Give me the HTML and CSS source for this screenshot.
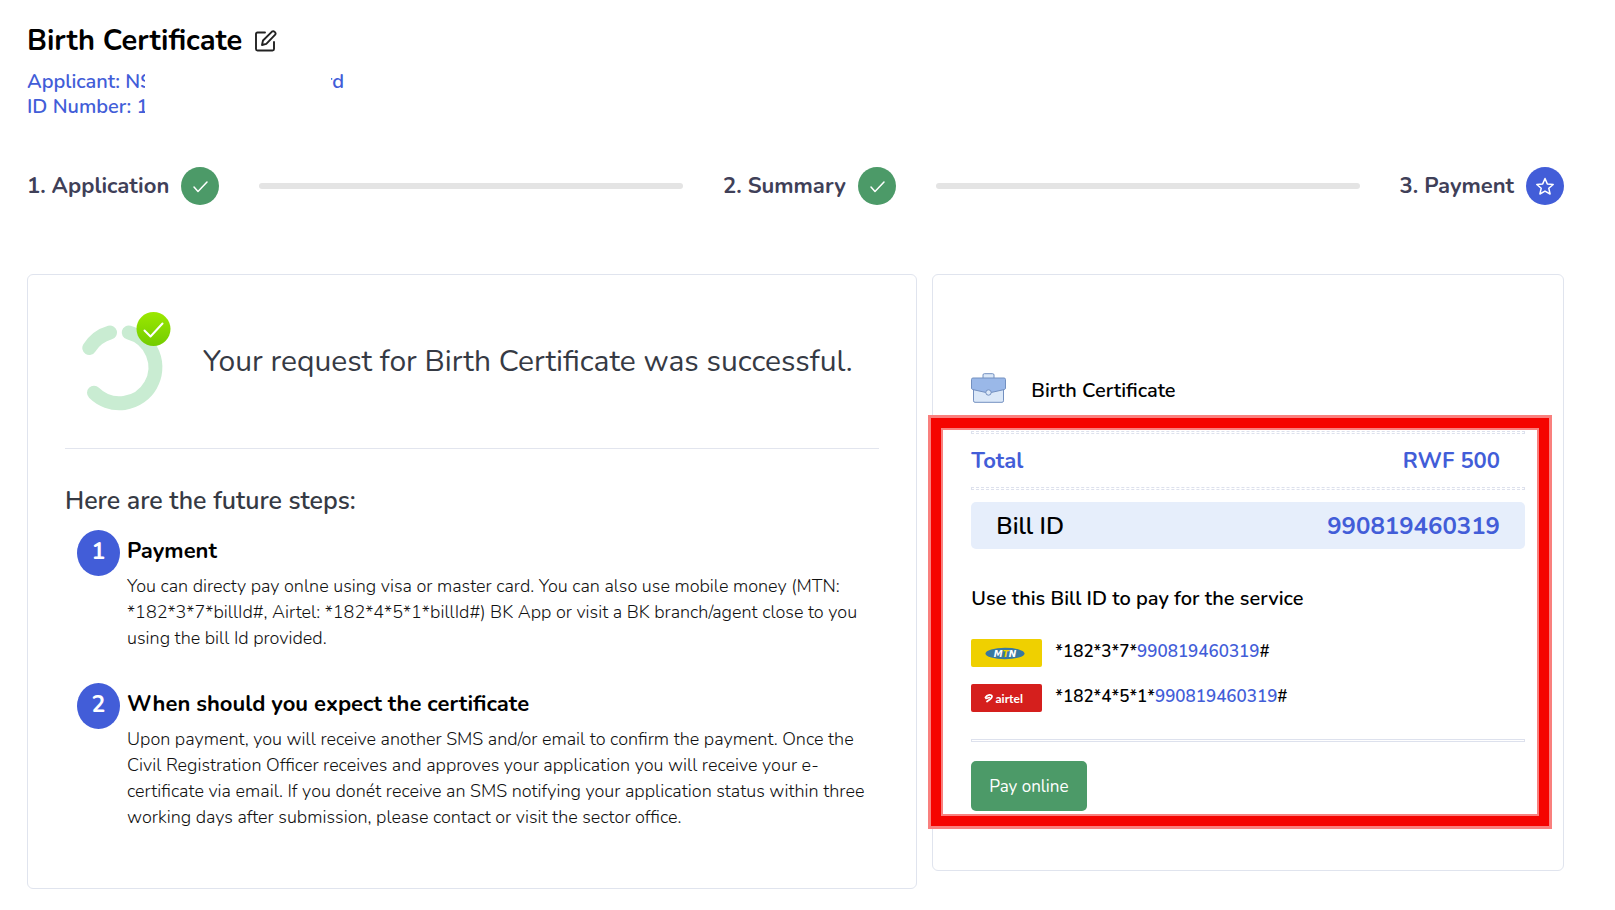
FILE: index.html
```html
<!DOCTYPE html>
<html lang="en">
<head>
  <meta charset="UTF-8">
  <meta name="viewport" content="width=device-width, initial-scale=1.0">
  <title>Birth Certificate</title>
  <link rel="stylesheet" href="styles.css">
</head>
<body>

  <!-- Header -->
  <header class="page-header">
    <h1>Birth Certificate
      <svg class="edit-icon" viewBox="0 0 22 22" fill="none" stroke="#222" stroke-width="1.9" stroke-linecap="round" stroke-linejoin="round">
        <path d="M10 2.500H2.500Q1 2.500 1 4V19Q1 20.500 2.500 20.500H17.500Q19 20.500 19 19V12"/>
        <path d="M7 15L8 10.500L17 1.600Q18.300 .6 19.700 1.900Q21.200 3.300 20.200 4.700L11.300 13.800Z"/>
      </svg>
    </h1>
    <div class="applicant">
      <p><span>Applicant: NS</span><span>rd</span></p>
      <p>ID Number: 1</p>
      <div class="mask"></div>
    </div>
  </header>

  <!-- Progress -->
  <nav class="steps">
    <div class="step">1. Application
      <svg class="step-icon done" viewBox="0 0 38 38"><path d="M13 20L17 24.500L26 15"/></svg>
    </div>
    <div class="step-line"></div>
    <div class="step">2. Summary
      <svg class="step-icon done" viewBox="0 0 38 38"><path d="M13 20L17 24.500L26 15"/></svg>
    </div>
    <div class="step-line"></div>
    <div class="step">3. Payment
      <svg class="step-icon current" viewBox="0 0 38 38"><path d="M19 11.500L21.300 16.900L27.200 17.500L22.800 21.300L24.100 27L19 24.100L13.900 27L15.200 21.300L10.800 17.500L16.700 16.900Z"/></svg>
    </div>
  </nav>

  <main class="content">
    <section class="card request">
      <div class="success">
        <svg class="success-icon" viewBox="0 0 90 100">
          <defs>
            <linearGradient id="lime" x1="0" y1="0" x2="0" y2="1">
              <stop offset="0" stop-color="#9be800"/>
              <stop offset="1" stop-color="#73cc00"/>
            </linearGradient>
          </defs>
          <g fill="none" stroke="#c9ecd2" stroke-width="14" stroke-linecap="round">
            <path d="M7.300 36A36 36 0 0 1 28 20.500"/>
            <path d="M46.700 20.500A36 36 0 1 1 12 80.800"/>
          </g>
          <circle cx="71.500" cy="17" r="17" fill="url(#lime)"/>
          <path d="M62.500 18.500L68.500 24.500L80.500 11.500" fill="none" stroke="#fff" stroke-width="2" stroke-linecap="round" stroke-linejoin="round"/>
        </svg>
        <h2>Your request for Birth Certificate was successful.</h2>
      </div>

      <h3>Here are the future steps:</h3>
      <div class="future">
        <span class="number">1</span>
        <div>
          <h4>Payment</h4>
          <p>You can directy pay onlne using visa or master card. You can also use mobile money (MTN:<br>
            *182*3*7*billId#, Airtel: *182*4*5*1*billId#) BK App or visit a BK branch/agent close to you<br>
            using the bill Id provided.</p>
        </div>
      </div>
      <div class="future">
        <span class="number">2</span>
        <div>
          <h4>When should you expect the certificate</h4>
          <p>Upon payment, you will receive another SMS and/or email to confirm the payment. Once the<br>
            Civil Registration Officer receives and approves your application you will receive your e-<br>
            certificate via email. If you donét receive an SMS notifying your application status within three<br>
            working days after submission, please contact or visit the sector office.</p>
        </div>
      </div>
    </section>

    <section class="card bill">
      <div class="service">
        <svg class="briefcase" viewBox="0 0 35 30" stroke="#7390c0" stroke-width="1">
          <path d="M12 5V2Q12 .7 13.300 .7H21.700Q23 .7 23 2V5" fill="#dbe8f8"/>
          <rect x="2.500" y="9" width="30" height="20.300" rx="1.500" fill="#dbe8f8"/>
          <path d="M2 5H33Q34.500 5 34.500 6.500V15Q34.500 16 33.500 16.500L20 19.500H15L1.500 16.500Q.5 16 .5 15V6.500Q.5 5 2 5Z" fill="#9ab8e8"/>
          <circle cx="17.500" cy="19.500" r="2.700" fill="#dbe8f8"/>
        </svg>
        <span>Birth Certificate</span>
      </div>

      <div class="payment">
        <div class="highlight"></div>
        <hr class="dashed">
        <div class="row total"><span>Total</span><span>RWF 500</span></div>
        <hr class="dashed">
        <div class="row bill-id"><span>Bill ID</span><strong>990819460319</strong></div>

        <h5>Use this Bill ID to pay for the service</h5>
        <div class="code">
          <svg class="operator" viewBox="0 0 71 28">
            <rect width="71" height="28" rx="2" fill="#efd000"/>
            <ellipse cx="34" cy="14.500" rx="19.500" ry="5.700" fill="#3878a0"/>
            <text class="mtn" x="34" y="17.500" text-anchor="middle" fill="#fff">M<tspan fill="#efd000">T</tspan>N</text>
          </svg>
          <span>*182*3*7*<b>990819460319</b>#</span>
        </div>
        <div class="code">
          <svg class="operator" viewBox="0 0 71 28">
            <rect width="71" height="28" rx="2" fill="#d51f1d"/>
            <path d="M14.500 13.500C16 10.500 21 10 21 12.500C21 14.500 18 16 16 17.500" fill="none" stroke="#fff" stroke-width="1.800" stroke-linecap="round"/>
            <path d="M15 14.500L18.500 13.500" stroke="#fff" stroke-width="1.500" stroke-linecap="round"/>
            <text class="airtel" x="24.500" y="18.500" fill="#fff">airtel</text>
          </svg>
          <span>*182*4*5*1*<b>990819460319</b>#</span>
        </div>
        <hr class="solid">
        <button type="button" class="pay">Pay online</button>
      </div>
    </section>
  </main>

</body>
</html>
```
FILE: styles.css
```css
* {
  box-sizing: border-box;
}

body {
  margin: 0;
  padding: 23px 51px 20px 27px;
  font-family: Nunito, Lato, sans-serif;
  background: #fff;
  color: #000;
}

h1, h2, h3, h4, h5, p {
  margin: 0;
}

svg {
  display: block;
  flex: none;
}

/* Header */
h1 {
  display: flex;
  align-items: center;
  gap: 13px;
  font-size: 29px;
  line-height: 36px;
  font-weight: 700;
}

.edit-icon {
  width: 22px;
  height: 22px;
}

.applicant {
  position: relative;
  width: 317px;
  margin-top: 10px;
  font-size: 20px;
  line-height: 25px;
  font-weight: 650;
  color: #425dd8;
}

.applicant p {
  display: flex;
  justify-content: space-between;
}

.mask {
  position: absolute;
  top: 0;
  bottom: 0;
  left: 118px;
  width: 186px;
  background: #fff;
}

/* Progress */
.steps {
  display: flex;
  align-items: center;
  gap: 40px;
  margin-top: 48px;
}

.step {
  display: flex;
  align-items: center;
  gap: 12px;
  font-size: 22px;
  font-weight: 700;
  color: #3f4058;
}

.step-line {
  flex: 1;
  height: 6px;
  border-radius: 3px;
  background: #e4e4e4;
}

.step-icon {
  width: 38px;
  height: 38px;
  border-radius: 50%;
  fill: none;
  stroke: #fff;
  stroke-width: 1.5;
  stroke-linecap: round;
  stroke-linejoin: round;
}

.done {
  background: #4c9a68;
}

.current {
  background: #425dd8;
}

/* Cards */
.content {
  display: grid;
  grid-template-columns: repeat(12, 1fr);
  gap: 15px;
  align-items: start;
  margin-top: 69px;
}

.card {
  border: 1px solid #e0e4ee;
  border-radius: 6px;
}

.request {
  grid-column: span 7;
  padding: 37px 37px 58px;
}

.bill {
  grid-column: span 5;
  padding: 98px 38px 59px;
}

.success {
  display: flex;
  align-items: center;
  gap: 31px;
  padding: 0 0 36px 17px;
  border-bottom: 1px solid #e2e5ee;
}

.success-icon {
  width: 90px;
  height: 100px;
}

h2 {
  font-size: 30px;
  line-height: 36px;
  font-weight: 400;
  color: #363a44;
}

h3 {
  margin: 37px 0 14px;
  font-size: 25px;
  line-height: 30px;
  font-weight: 650;
  color: #363a44;
}

.future {
  display: flex;
  gap: 7px;
  padding-left: 12px;
  margin-bottom: 32px;
}

.future:last-child {
  margin-bottom: 0;
}

.number {
  flex: none;
  width: 43px;
  height: 46px;
  border-radius: 50%;
  background: #425dd8;
  color: #fff;
  font-size: 23px;
  line-height: 43px;
  font-weight: 700;
  text-align: center;
}

h4 {
  padding-top: 6px;
  font-size: 22px;
  line-height: 30px;
  font-weight: 700;
}

.future p {
  padding-top: 7px;
  font-size: 18px;
  line-height: 26px;
  font-weight: 300;
  color: #111;
}

/* Bill */
.service {
  display: flex;
  align-items: center;
  gap: 25px;
  padding-bottom: 28px;
  font-size: 20px;
  font-weight: 650;
}

.service span {
  padding-top: 5px;
  line-height: 25px;
}

.briefcase {
  width: 35px;
  height: 30px;
}

.payment {
  position: relative;
}

.highlight {
  position: absolute;
  top: -16px;
  right: -27px;
  bottom: -18px;
  left: -43px;
  border: 10px solid #f50400;
  outline: 3px solid #f9807e;
  margin: 3px;
  box-shadow: inset 0 0 0 2px #f9807e;
  pointer-events: none;
}

hr {
  margin: 0;
  height: 3px;
  border: 1px solid #dde1ed;
}

.dashed {
  border-style: dashed;
}

.row {
  display: flex;
  justify-content: space-between;
  align-items: center;
}

.total {
  padding: 12px 25px 11px 0;
  font-size: 22px;
  line-height: 30px;
  font-weight: 700;
  color: #425dd8;
}

.bill-id {
  margin-top: 12px;
  padding: 9px 25px 7px;
  border-radius: 5px;
  background: #e6eefb;
  font-size: 24px;
  line-height: 31px;
  font-weight: 600;
}

.bill-id strong {
  font-weight: 700;
  color: #425dd8;
}

h5 {
  margin: 37px 0 28px;
  font-size: 20px;
  line-height: 25px;
  font-weight: 650;
}

.code {
  display: flex;
  gap: 13px;
  margin-bottom: 17px;
  font-size: 17px;
  line-height: 26px;
  font-weight: 650;
}

.code b {
  font-weight: 650;
  color: #425dd8;
}

.operator {
  width: 71px;
  height: 28px;
}

.mtn {
  font: italic bold 9px "DejaVu Sans", sans-serif;
}

.airtel {
  font: bold 12px Lato, sans-serif;
}

.solid {
  margin-top: 27px;
}

.pay {
  display: block;
  margin-top: 19px;
  height: 50px;
  padding: 0 18px;
  border: 0;
  border-radius: 5px;
  background: #4c9a68;
  color: #fff;
  font-family: inherit;
  font-size: 17px;
  cursor: pointer;
}

@media (max-width: 1000px) {
  .request, .bill {
    grid-column: span 12;
  }

  .steps {
    flex-wrap: wrap;
  }
}
```
